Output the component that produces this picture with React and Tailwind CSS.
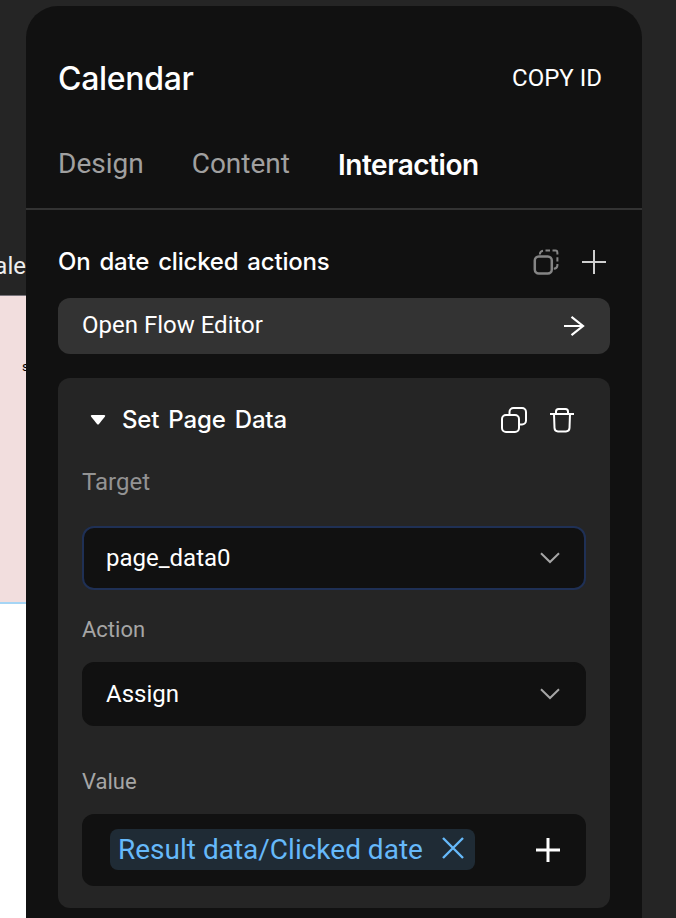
const roboto = "font-['Roboto',sans-serif]";
const inter = "font-['Inter',sans-serif]";

function CopyIcon() {
  return (
    <svg width="26" height="26" viewBox="0 0 26 26" fill="none" stroke="white" strokeWidth="2">
      <rect x="1" y="8" width="17" height="17" rx="4" />
      <path d="M8.5 8V5a4 4 0 0 1 4-4h8.5a4 4 0 0 1 4 4v8.5a4 4 0 0 1-4 4h-3" />
    </svg>
  );
}

function PasteIcon() {
  return (
    <svg width="26" height="26" viewBox="0 0 26 26" fill="none" stroke="#858585" strokeWidth="2">
      <rect x="1.8" y="7.5" width="17" height="17" rx="4" strokeWidth="2.5" />
      <path d="M6.8 5.5Q7 2.2 10 1.8M12.5 1.6H17M19.5 1.6H22.5Q24.4 1.6 24.4 4V5.5M24.4 8.2V12.5M24.4 15V16.5Q24 19.5 20.8 19.8" />
    </svg>
  );
}

function TrashIcon() {
  return (
    <svg width="24" height="26" viewBox="0 0 24 26" fill="none" stroke="white" strokeWidth="2">
      <path d="M0 7H24M6 7V4.5Q6 2 8.5 2H15.5Q18 2 18 4.5V7M4 7L4.5 21Q4.7 24.4 8 24.4H16Q19.3 24.4 19.5 21L20 7" />
    </svg>
  );
}

function Chevron() {
  return (
    <svg width="20" height="12" viewBox="0 0 20 12" fill="none" stroke="#a6a6a6" strokeWidth="2">
      <path d="M1 1.2L10 10L19 1.2" />
    </svg>
  );
}

function Select({ value, active }) {
  return (
    <div
      className={`flex h-16 items-center justify-between rounded-xl border-2 bg-[#111111] pl-[22px] pr-6 ${
        active ? "border-[#1f3055]" : "border-[#111111]"
      }`}
    >
      <span className={`${roboto} text-2xl leading-8 text-white`}>{value}</span>
      <Chevron />
    </div>
  );
}

export default function App() {
  return (
    <div className="flex h-[918px] w-[676px] overflow-hidden bg-[#252525]">
      <div className={`flex w-[26px] shrink-0 flex-col overflow-hidden ${roboto}`}>
        <div className="flex h-[296px] shrink-0 justify-end border-b border-[#77737a] pt-[250px]">
          <span className="whitespace-nowrap text-2xl leading-8 text-[#eeeeee]">Cale</span>
        </div>
        <div className="h-[306px] shrink-0 bg-[#f2dede] pl-[22px] pt-[63px]">
          <span className="block text-[13px] leading-4 text-black">s</span>
        </div>
        <div className="h-0.5 shrink-0 bg-[#a5d5f5]" />
        <div className="flex-1 bg-white" />
      </div>

      <main className="mt-1.5 flex w-[616px] shrink-0 flex-col rounded-t-[32px] bg-[#111111]">
        <header className="flex h-[114px] items-center justify-between pl-8 pr-10 pt-[30px]">
          <h1 className={`${inter} pt-px text-[32px] font-medium leading-10 tracking-[-0.3px] text-white`}>Calendar</h1>
          <button className={`${roboto} text-2xl leading-8 text-white`}>COPY ID</button>
        </header>
        <nav className={`flex h-[90px] items-start gap-12 border-b-2 border-[#333333] pl-8 pt-6 text-[28px] leading-10 text-[#a0a0a0] ${roboto}`}>
          <span>Design</span>
          <span>Content</span>
          <span className={`${inter} pt-px font-semibold tracking-[-0.45px] text-white`}>Interaction</span>
        </nav>

        <section className="px-8 pt-8">
          <div className="flex h-10 items-center justify-between">
            <h2 className={`${inter} text-2xl font-medium leading-8 tracking-[-0.2px] text-white [word-spacing:2.8px]`}>On date clicked actions</h2>
            <div className="flex items-center gap-[23px] pr-1">
              <PasteIcon />
              <svg width="24" height="24" viewBox="0 0 24 24" stroke="#cfcfcf" strokeWidth="2">
                <path d="M12 0V24M0 12H24" />
              </svg>
            </div>
          </div>
          <button className="mt-4 flex h-14 w-full items-center justify-between rounded-xl bg-[#333333] pl-6 pr-[25px]">
            <span className={`${roboto} pb-0.5 text-2xl leading-8 text-white`}>Open Flow Editor</span>
            <svg width="21" height="22" viewBox="0 0 21 22" fill="none" stroke="white" strokeWidth="2.2">
              <path d="M0 11H19M7.5 1.8L19 11L7.5 20.2" />
            </svg>
          </button>

          <article className="mt-6 h-[530px] rounded-xl bg-[#252525] px-6">
            <div className="flex h-[84px] items-center pl-2 pr-3">
              <svg width="16" height="10" viewBox="0 0 16 10" fill="white">
                <path d="M2 0H14Q16 .3 14.8 1.8L9 9Q8 10 7 9L1.2 1.8Q0 .3 2 0Z" />
              </svg>
              <h3 className={`${inter} ml-4 flex-1 text-2xl font-medium leading-8 tracking-[-0.15px] text-white [word-spacing:2.8px]`}>Set Page Data</h3>
              <div className="flex items-center gap-[23px]">
                <CopyIcon />
                <TrashIcon />
              </div>
            </div>
            <div className={`${roboto} flex h-[64px] items-start pt-1 text-2xl leading-8 text-[#939393]`}>Target</div>
            <Select value="page_data0" active />
            <div className={`${roboto} flex h-[72px] items-center pt-2 text-[22px] leading-8 text-[#a6a6a6]`}>Action</div>
            <Select value="Assign" />
            <div className={`${roboto} flex h-[88px] items-end pb-4 text-[22px] leading-8 text-[#a6a6a6]`}>Value</div>
            <div className="flex h-[72px] items-center justify-between rounded-xl bg-[#111111] pb-0.5 pl-7 pr-[26px]">
              <div className="flex h-[41px] items-center gap-[19px] rounded-lg bg-[#1f2b35] pl-2 pr-[11px]">
                <span className={`${roboto} pt-0.5 text-[28px] leading-8 text-[#66b9fa]`}>Result data/Clicked date</span>
                <svg className="mb-0.5" width="22" height="22" viewBox="0 0 22 22" stroke="#66b9fa" strokeWidth="2.4">
                  <path d="M1 1L21 21M21 1L1 21" />
                </svg>
              </div>
              <svg className="mt-0.5" width="24" height="24" viewBox="0 0 24 24" stroke="white" strokeWidth="3">
                <path d="M12 0V24M0 12H24" />
              </svg>
            </div>
          </article>
        </section>
      </main>
    </div>
  );
}
